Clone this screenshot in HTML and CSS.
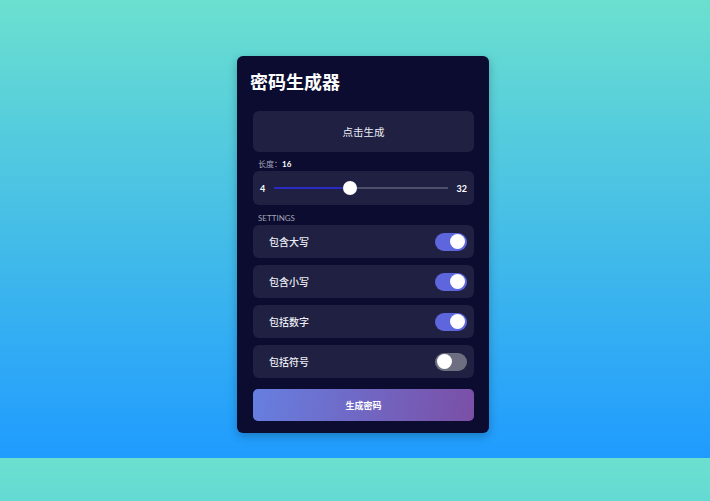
FILE: index.html
```html
<!DOCTYPE html>
<html lang="zh">
<head>
<meta charset="utf-8">
<title>密码生成器</title>
<link rel="stylesheet" href="styles.css">
</head>
<body>
<div class="card">
  <h1 class="title">密码生成器</h1>
  <div class="result">点击生成</div>
  <div class="label">长度：<b>16</b></div>
  <div class="slider-box">
    <span class="num">4</span>
    <div class="track">
      <div class="fill" style="width:44%"></div>
      <div class="thumb" style="left:44%"></div>
    </div>
    <span class="num">32</span>
  </div>
  <div class="label settings">SETTINGS</div>
  <div class="rows">
    <div class="row"><span>包含大写</span><span class="toggle on"><i></i></span></div>
    <div class="row"><span>包含小写</span><span class="toggle on"><i></i></span></div>
    <div class="row"><span>包括数字</span><span class="toggle on"><i></i></span></div>
    <div class="row"><span>包括符号</span><span class="toggle"><i></i></span></div>
  </div>
  <button class="btn">生成密码</button>
</div>
</body>
</html>
```
FILE: styles.css
```css
html, body { margin: 0; }
body {
  padding: 56px 0 25px 16px;
  background: linear-gradient(to bottom, #6be0cf, #1f9bff);
  font-family: "Lato", "Noto Sans CJK SC", sans-serif;
  color: #fff;
  display: flex;
  justify-content: center;
}
.card {
  width: 252px;
  box-sizing: border-box;
  padding: 14px 15px 12px 16px;
  background: #0b0c30;
  border-radius: 6px;
  box-shadow: 0 3px 10px rgba(0, 0, 0, 0.25);
}
.title {
  margin: 0 0 0 -3px;
  font-size: 18px;
  line-height: 24px;
  font-weight: 700;
}
.result {
  margin-top: 17px;
  height: 41px;
  background: #1f2042;
  border-radius: 6px;
  display: flex;
  align-items: center;
  justify-content: center;
  font-size: 10.5px;
  color: #ececf4;
}
.label {
  margin-top: 6px;
  padding-left: 5px;
  font-size: 8px;
  line-height: 12px;
  color: #a3a4b6;
}
.label b { color: #fff; font-weight: 700; }
.slider-box {
  margin-top: 1px;
  height: 34px;
  background: #1f2042;
  border-radius: 6px;
  display: flex;
  align-items: center;
  gap: 9px;
  padding: 0 7px;
}
.num { font-size: 9px; font-weight: 700; color: #fff; }
.track {
  flex: 1;
  height: 2px;
  background: #4d4e6a;
  position: relative;
}
.fill { height: 100%; background: #2b2bc2; }
.thumb {
  position: absolute;
  top: 50%;
  width: 14px;
  height: 14px;
  border-radius: 50%;
  background: #fff;
  transform: translate(-50%, -50%);
}
.settings { margin-top: 7px; }
.rows { display: flex; flex-direction: column; gap: 7px; margin-top: 1px; }
.row {
  height: 33px;
  background: #1f2042;
  border-radius: 6px;
  display: flex;
  align-items: center;
  justify-content: space-between;
  padding: 0 7px 0 16px;
  font-size: 10px;
  font-weight: 500;
  color: #ececf4;
}
.toggle {
  width: 32px;
  height: 18px;
  border-radius: 9px;
  background: #6d6f80;
  display: flex;
  align-items: center;
  padding: 0 2px;
  box-sizing: border-box;
}
.toggle i {
  width: 15px;
  height: 15px;
  border-radius: 50%;
  background: #fff;
}
.toggle.on { background: #5e66dd; justify-content: flex-end; }
.btn {
  display: block;
  width: 100%;
  margin-top: 11px;
  height: 32px;
  border: 0;
  border-radius: 5px;
  background: linear-gradient(100deg, #667fe0, #7b4fa6);
  color: #fff;
  font-family: "Lato", "Noto Sans CJK SC", sans-serif;
  font-size: 9px;
  font-weight: 700;
}
```
